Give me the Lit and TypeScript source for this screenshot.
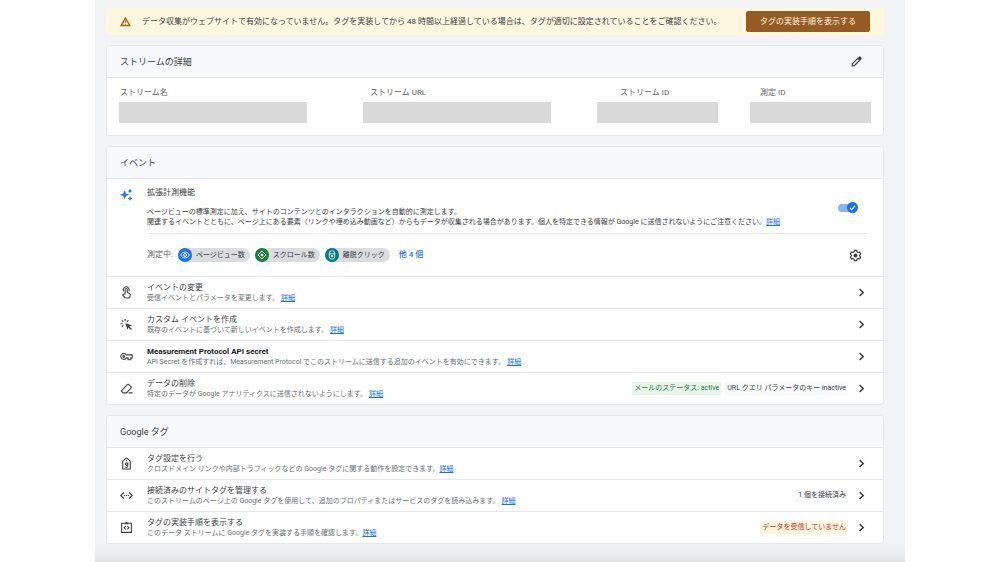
import { LitElement, html, css, svg, nothing } from "lit";
import type { TemplateResult } from "lit";
import { customElement, property } from "lit/decorators.js";
import { classMap } from "lit/directives/class-map.js";

const icons: Record<string, TemplateResult> = {
  warning: svg`<path d="M12 5.500 20 19.500H4z" fill="none" stroke="currentColor" stroke-width="2.600"/><path d="M13 16h-2v2h2v-2zm0-6h-2v4.500h2V10z"/>`,
  pencil: svg`<path d="M4 20v-3.500L14.500 6 18 9.500 7.500 20z" fill="none" stroke="currentColor" stroke-width="2.200"/><path d="M14 5.500l2.500-2.500q1.500-1.300 3 0l1.500 1.500q1.300 1.500 0 3L18.500 10z"/>`,
  sparkle: svg`<path d="M8.500 5.500 10.500 10.500 16 12.500 10.500 14.500 8.500 19.500 6.500 14.500 1 12.500 6.500 10.500z" stroke="currentColor" stroke-width="1"/><path d="M18.500 1 19.800 4.200 23 5.500 19.800 6.800 18.500 10 17.200 6.800 14 5.500 17.200 4.200zM18.500 15 19.800 18.200 23 19.500 19.800 20.800 18.500 24 17.200 20.800 14 19.500 17.200 18.200z"/>`,
  gear: svg`<path d="M9.800 2.500h4.400l.6 2.900 1.900 1.100 2.800-.9 2.200 3.800-2.200 1.900v1.400l2.200 1.900-2.200 3.800-2.800-.9-1.900 1.100-.6 2.900H9.800l-.6-2.900-1.900-1.100-2.800.9-2.200-3.800 2.200-1.900v-1.400L2.300 9.400l2.200-3.800 2.800.9 1.900-1.100z" fill="none" stroke="currentColor" stroke-width="2.200" stroke-linejoin="round"/><circle cx="12" cy="12" r="3.600"/>`,
  touch: svg`<g fill="none" stroke="currentColor" stroke-width="2"><path d="M9.500 14.500V6.500a2 2 0 0 1 4 0v5.500l4.500 2.200c.8.400 1.200 1.100 1 2l-.8 4.300c-.2.900-.9 1.500-1.800 1.500h-5.600c-.6 0-1.100-.2-1.500-.6L4.800 16.500l1-1z"/><path d="M7 9.800a5.300 5.300 0 1 1 9 0"/></g>`,
  click: svg`<path d="M10 9l12 4.700-4.700 2 4.700 4.700-1.700 1.700-4.700-4.700-2 4.300z"/><g stroke="currentColor" stroke-width="2"><path d="M9.500 2v4M3.500 4.500l2.700 2.700M1 10.500h4M15.500 4.500l-2.500 2.700M3.500 16.500l2.700-2.700"/></g>`,
  key: svg`<g fill="none" stroke="currentColor" stroke-width="2"><path d="M11.700 9H22.500v5.500H20V18h-5v-3.500h-3.300A5.500 5.500 0 1 1 11.700 9z"/><circle cx="7" cy="12" r="1.600"/></g>`,
  eraser: svg`<g fill="none" stroke="currentColor" stroke-width="2"><path d="M2.500 16.500 14 4.500q1-1 2 0l4.500 4.500q1 1 0 2L12 20H5.500z"/><path d="M16 20h7"/></g>`,
  tag: svg`<g fill="none" stroke="currentColor" stroke-width="2"><path d="M5 8l5.500-5.500q1.500-1 3 0L19 8v14H5z"/><circle cx="12" cy="13" r="2.300"/><path d="M14.300 10.500v6.500q0 2-2.300 2-1.500 0-2.300-1"/></g><circle cx="12" cy="6.500" r="1.300"/>`,
  code: svg`<g fill="none" stroke="currentColor" stroke-width="2.200"><path d="M7 6.500 1.500 12 7 17.500M17 6.500l5.500 5.500-5.500 5.500"/></g><path d="M7.500 11h2v2h-2zM11 11h2v2h-2zM14.500 11h2v2h-2z"/>`,
  clipboard: svg`<g fill="none" stroke="currentColor" stroke-width="2"><path d="M3 4h18v17H3z"/><path d="M10.500 9.500 7.500 12.500l3 3M13.500 9.500l3 3-3 3"/></g><path d="M8.500 3h2a1.500 1.500 0 0 1 3 0h2v3h-7z"/>`,
  chevron: svg`<path d="M8.500 5.500l6.500 6.500-6.500 6.500" fill="none" stroke="currentColor" stroke-width="3"/>`,
  eye: svg`<g fill="none" stroke="currentColor" stroke-width="2"><path d="M1.500 12C4 7.500 7.500 5 12 5s8 2.500 10.500 7C20 16.500 16.500 19 12 19S4 16.500 1.500 12z"/><circle cx="12" cy="12" r="3.700"/></g><circle cx="12" cy="12" r="1.500"/>`,
  scroll: svg`<path d="M12 2.500 21.500 12 12 21.500 2.500 12z" fill="none" stroke="currentColor" stroke-width="2.200"/><circle cx="12" cy="12" r="3.200"/>`,
  mouse: svg`<g fill="none" stroke="currentColor" stroke-width="2"><rect x="5.500" y="2" width="13" height="20" rx="5.500"/><path d="M5.500 9h13"/></g><path d="M9.500 12h5v5h-5z"/>`,
};

const iconStyles = css`
  svg {
    display: block;
    flex: none;
    fill: currentColor;
    width: 13px;
    height: 13px;
  }
`;

const icon = (name: string) =>
  html`<svg viewBox="0 0 24 24" aria-hidden="true">${icons[name]}</svg>`;

const controlStyles = css`
  * {
    box-sizing: border-box;
  }
  button {
    font: inherit;
    color: inherit;
    background: none;
    border: 0;
    padding: 0;
    margin: 0;
    cursor: pointer;
  }
  a {
    color: #1a73e8;
  }
  h3,
  p {
    margin: 0;
    font-weight: 400;
  }
`;

interface Badge {
  text: string;
  tone: "ok" | "plain" | "alert";
}

interface Row {
  icon: string;
  title: string;
  text: string;
  strong?: boolean;
  tight?: boolean;
  badges?: Badge[];
}

const eventRows: Row[] = [
  { icon: "touch", title: "イベントの変更", text: "受信イベントとパラメータを変更します。" },
  { icon: "click", title: "カスタム イベントを作成", text: "既存のイベントに基づいて新しいイベントを作成します。" },
  {
    icon: "key",
    title: "Measurement Protocol API secret",
    text: "API Secret を作成すれば、Measurement Protocol でこのストリームに送信する追加のイベントを有効にできます。",
    strong: true,
  },
  {
    icon: "eraser",
    title: "データの削除",
    text: "特定のデータが Google アナリティクスに送信されないようにします。",
    badges: [
      { text: "メールのステータス: active", tone: "ok" },
      { text: "URL クエリ パラメータのキー inactive", tone: "plain" },
    ],
  },
];

const tagRows: Row[] = [
  {
    icon: "tag",
    title: "タグ設定を行う",
    text: "クロスドメイン リンクや内部トラフィックなどの Google タグに関する動作を設定できます。",
    tight: true,
  },
  {
    icon: "code",
    title: "接続済みのサイトタグを管理する",
    text: "このストリームのページ上の Google タグを使用して、追加のプロパティまたはサービスのタグを読み込みます。",
    badges: [{ text: "1 個を接続済み", tone: "plain" }],
  },
  {
    icon: "clipboard",
    title: "タグの実装手順を表示する",
    text: "このデータ ストリームに Google タグを実装する手順を確認します。",
    tight: true,
    badges: [{ text: "データを受信していません", tone: "alert" }],
  },
];

const chips = [
  { icon: "eye", text: "ページビュー数", tone: "blue" },
  { icon: "scroll", text: "スクロール数", tone: "green" },
  { icon: "mouse", text: "離脱クリック", tone: "teal" },
];

const fields = [
  { label: "ストリーム名", cls: "name" },
  { label: "ストリーム URL", cls: "url" },
  { label: "ストリーム ID", cls: "sid" },
  { label: "測定 ID", cls: "mid" },
];

@customElement("setting-row")
export class SettingRow extends LitElement {
  @property({ attribute: false }) row!: Row;

  static styles = [
    controlStyles,
    iconStyles,
    css`
      :host {
        display: block;
        border-top: 1px solid #e6e8ea;
      }
      .row {
        display: flex;
        align-items: center;
        min-height: 31px;
        padding: 0 15px 0 13px;
        color: #3c4043;
      }
      .body {
        flex: 1;
        min-width: 0;
        margin-left: 14px;
      }
      .title {
        font-size: 8px;
        line-height: 10px;
        color: #3c4043;
      }
      .title.strong {
        font-weight: 700;
        color: #202124;
      }
      .text {
        font-size: 7px;
        line-height: 10px;
        color: #6b6f74;
      }
      .text a {
        margin-left: 2px;
      }
      .text.tight a {
        margin-left: 0;
      }
      .badges {
        display: flex;
        gap: 4px;
        margin-right: 7px;
      }
      .badge {
        padding: 0 2px;
        font-size: 7px;
        line-height: 13px;
        white-space: nowrap;
        background: #f8f9fa;
      }
      .ok {
        background: #e6f4ea;
        color: #188038;
      }
      .alert {
        background: #fef7e0;
        color: #d93025;
      }
    `,
  ];

  render() {
    const r = this.row;
    return html`
      <div class="row">
        ${icon(r.icon)}
        <div class="body">
          <h3 class=${classMap({ title: true, strong: !!r.strong })}>${r.title}</h3>
          <p class=${classMap({ text: true, tight: !!r.tight })}>${r.text}<a href="#">詳細</a></p>
        </div>
        ${r.badges
          ? html`<div class="badges">
              ${r.badges.map((b) => html`<span class="badge ${b.tone}">${b.text}</span>`)}
            </div>`
          : nothing}
        <button type="button" aria-label=${r.title}>${icon("chevron")}</button>
      </div>
    `;
  }
}

@customElement("app-root")
export class AppRoot extends LitElement {
  static styles = [
    controlStyles,
    iconStyles,
    css`
      :host {
        display: block;
        min-height: 100vh;
        background: #fff;
        font-family: Roboto, "Noto Sans CJK JP", sans-serif;
        font-size: 8px;
        line-height: 10px;
        color: #3c4043;
      }
      .page {
        display: flex;
        flex-direction: column;
        gap: 10px;
        width: 81%;
        min-height: 100vh;
        margin: 0 auto;
        padding: 8px 21px 19px 11px;
        background: linear-gradient(to top, #dfe1e3, #e9ebed 8px, #f1f3f4 20px);
      }
      .banner {
        display: flex;
        align-items: center;
        min-height: 27px;
        padding: 0 14px 0 13px;
        background: #fef7e0;
        border-radius: 4px;
      }
      .banner svg {
        color: #b06000;
      }
      .banner p {
        flex: 1;
        margin-left: 10px;
      }
      .cta {
        height: 21px;
        padding: 0 14px;
        background: #945c22;
        color: #fef7e0;
        border-radius: 2px;
      }
      .card {
        background: #fff;
        border: 1px solid #e6e8ea;
        border-radius: 4px;
        overflow: hidden;
      }
      .head {
        display: flex;
        align-items: center;
        justify-content: space-between;
        min-height: 31px;
        padding: 0 20px 0 13px;
        background: #f8f9fa;
      }
      .head h2 {
        margin: 0;
        font-size: 9px;
        line-height: 12px;
        font-weight: 400;
      }
      .fields {
        display: grid;
        grid-template-columns: 244fr 234fr 153fr 121fr;
        margin: 0;
        padding: 9px 12px 12px 12px;
        border-top: 1px solid #e6e8ea;
        color: #5f6368;
      }
      .field dt {
        line-height: 12px;
        padding-left: 1px;
      }
      .field dd {
        height: 21px;
        margin: 3px 0 0;
        background: #d9d9d9;
      }
      .name dd {
        margin-right: 56px;
      }
      .url dt {
        padding-left: 7px;
      }
      .url dd {
        margin-right: 46px;
      }
      .sid dt {
        padding-left: 23px;
      }
      .sid dd {
        margin-right: 32px;
      }
      .mid dt {
        padding-left: 10px;
      }
      .enhanced {
        display: flex;
        padding: 9px 14px 0 13px;
        border-top: 1px solid #e6e8ea;
      }
      .spark {
        color: #1a73e8;
      }
      .main {
        flex: 1;
        margin-left: 14px;
      }
      .main h3 {
        font-size: 8px;
      }
      .summary {
        display: flex;
        align-items: center;
        justify-content: space-between;
        padding: 0 11px 6px 0;
        border-bottom: 1px solid #e8eaed;
      }
      .desc {
        margin-top: 9px;
        font-size: 7px;
        line-height: 10px;
      }
      .switch {
        appearance: none;
        position: relative;
        width: 20px;
        height: 11px;
        margin: 0;
        cursor: pointer;
      }
      .switch::before {
        content: "";
        position: absolute;
        inset: 2px 3px 1px 0;
        border-radius: 4px;
        background: #8ab4f8;
      }
      .switch::after {
        content: "";
        position: absolute;
        top: 0;
        right: 0;
        width: 11px;
        height: 11px;
        border-radius: 50%;
        background: #1a73e8;
      }
      .toggle {
        position: relative;
        display: flex;
      }
      .toggle svg {
        position: absolute;
        top: 2px;
        right: 2px;
        width: 7px;
        height: 7px;
        color: #fff;
        pointer-events: none;
      }
      .measuring {
        display: flex;
        align-items: center;
        gap: 5px;
        min-height: 42px;
        padding-right: 7px;
      }
      .measuring .label {
        color: #5f6368;
      }
      .chip {
        display: flex;
        align-items: center;
        gap: 4px;
        padding-right: 5px;
        border-radius: 7px;
        background: #dadce0;
        font-size: 7px;
      }
      .dot {
        display: grid;
        place-items: center;
        width: 14px;
        height: 14px;
        border-radius: 50%;
        color: #fff;
      }
      .dot svg {
        width: 10px;
        height: 10px;
      }
      .blue {
        background: #1a73e8;
      }
      .green {
        background: #188038;
      }
      .teal {
        background: #007b83;
      }
      .more {
        margin-left: 4px;
        color: #1a73e8;
        font-weight: 500;
        text-decoration: none;
      }
      .settings {
        margin-left: auto;
      }
    `,
  ];

  render() {
    return html`
      <main class="page">
        <div class="banner" role="status">
          ${icon("warning")}
          <p>データ収集がウェブサイトで有効になっていません。タグを実装してから 48 時間以上経過している場合は、タグが適切に設定されていることをご確認ください。</p>
          <button class="cta" type="button">タグの実装手順を表示する</button>
        </div>

        <section class="card">
          <div class="head">
            <h2>ストリームの詳細</h2>
            <button type="button" aria-label="ストリームの詳細">${icon("pencil")}</button>
          </div>
          <dl class="fields">
            ${fields.map((f) => html`<div class="field ${f.cls}"><dt>${f.label}</dt><dd></dd></div>`)}
          </dl>
        </section>

        <section class="card">
          <div class="head"><h2>イベント</h2></div>
          <div class="enhanced">
            <div class="spark">${icon("sparkle")}</div>
            <div class="main">
              <div class="summary">
                <div>
                  <h3><label for="enhanced">拡張計測機能</label></h3>
                  <p class="desc">
                    ページビューの標準測定に加え、サイトのコンテンツとのインタラクションを自動的に測定します。<br />関連するイベントとともに、ページ上にある要素（リンクや埋め込み動画など）からもデータが収集される場合があります。個人を特定できる情報が Google に送信されないようにご注意ください。<a href="#">詳細</a>
                  </p>
                </div>
                <div class="toggle">
                  <input class="switch" id="enhanced" type="checkbox" role="switch" checked />
                  <svg viewBox="0 0 24 24" aria-hidden="true">
                    <path d="M3 13l6 6L21 6" fill="none" stroke="currentColor" stroke-width="4" />
                  </svg>
                </div>
              </div>
              <div class="measuring">
                <span class="label">測定中:</span>
                ${chips.map(
                  (c) => html`<span class="chip"><span class="dot ${c.tone}">${icon(c.icon)}</span>${c.text}</span>`,
                )}
                <a class="more" href="#">他 4 個</a>
                <button class="settings" type="button" aria-label="拡張計測機能">${icon("gear")}</button>
              </div>
            </div>
          </div>
          ${eventRows.map((r) => html`<setting-row .row=${r}></setting-row>`)}
        </section>

        <section class="card">
          <div class="head"><h2>Google タグ</h2></div>
          ${tagRows.map((r) => html`<setting-row .row=${r}></setting-row>`)}
        </section>
      </main>
    `;
  }
}
